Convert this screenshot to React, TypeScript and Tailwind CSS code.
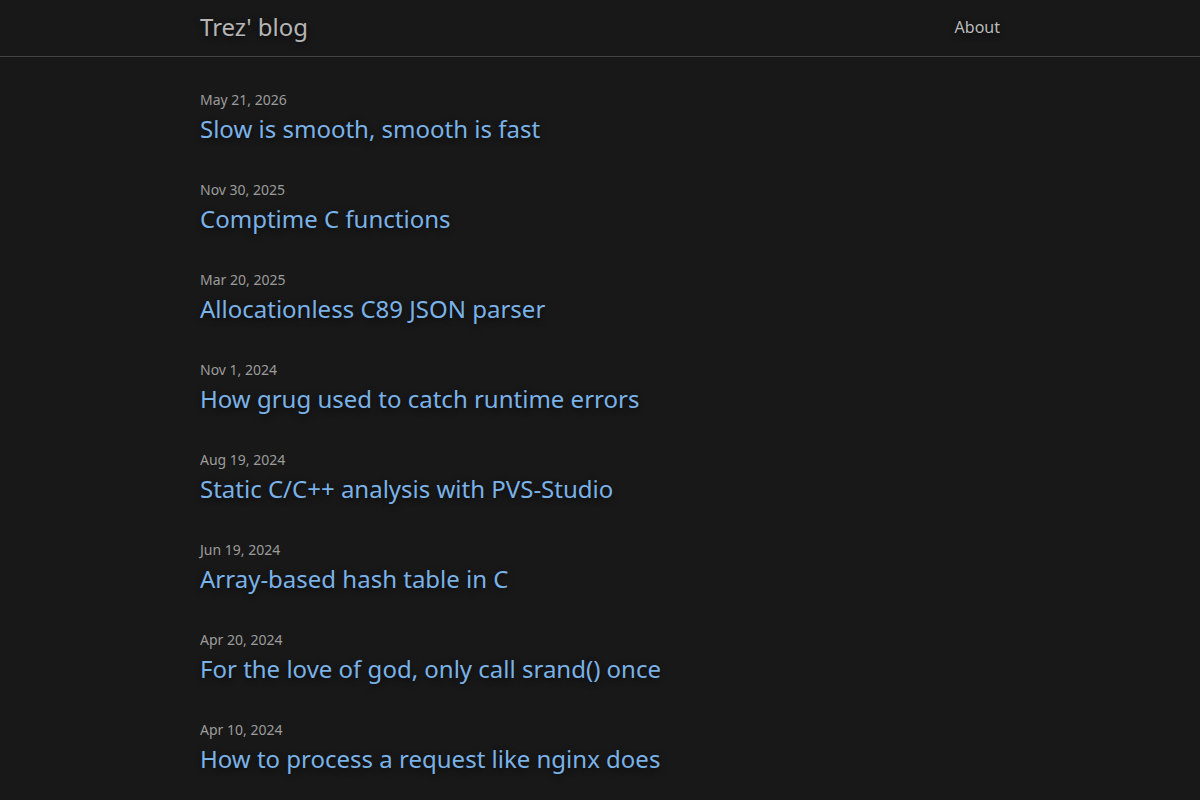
const posts = [
  { date: 'May 21, 2026', title: 'Slow is smooth, smooth is fast' },
  { date: 'Nov 30, 2025', title: 'Comptime C functions' },
  { date: 'Mar 20, 2025', title: 'Allocationless C89 JSON parser' },
  { date: 'Nov 1, 2024', title: 'How grug used to catch runtime errors' },
  { date: 'Aug 19, 2024', title: 'Static C/C++ analysis with PVS-Studio' },
  { date: 'Jun 19, 2024', title: 'Array-based hash table in C' },
  { date: 'Apr 20, 2024', title: 'For the love of god, only call srand() once' },
  { date: 'Apr 10, 2024', title: 'How to process a request like nginx does' },
];

export default function App() {
  return (
    <div className="min-h-screen bg-[#181818] font-['Noto_Sans',sans-serif]">
      {/* Header */}
      <header className="border-b border-[#444]">
        <div className="mx-auto flex h-14 w-[800px] items-center justify-between pb-0.5">
          <a className="text-2xl text-[#b5b5b5] [text-shadow:0_2px_6px_rgba(0,0,0,0.6)]">Trez' blog</a>
          <a className="text-base text-[#bbb] [text-shadow:0_2px_6px_rgba(0,0,0,0.6)]">About</a>
        </div>
      </header>

      {/* Posts */}
      <main className="mx-auto w-[800px] pt-[33px]">
        {posts.map((post) => (
          <div key={post.title} className="mb-[33px]">
            <p className="text-sm leading-5 text-[#9c9c9c]">{post.date}</p>
            <a className="mt-px block text-2xl leading-9 text-[#7ab2e8] [text-shadow:0_2px_6px_rgba(0,0,0,0.6)]">
              {post.title}
            </a>
          </div>
        ))}
      </main>
    </div>
  );
}
